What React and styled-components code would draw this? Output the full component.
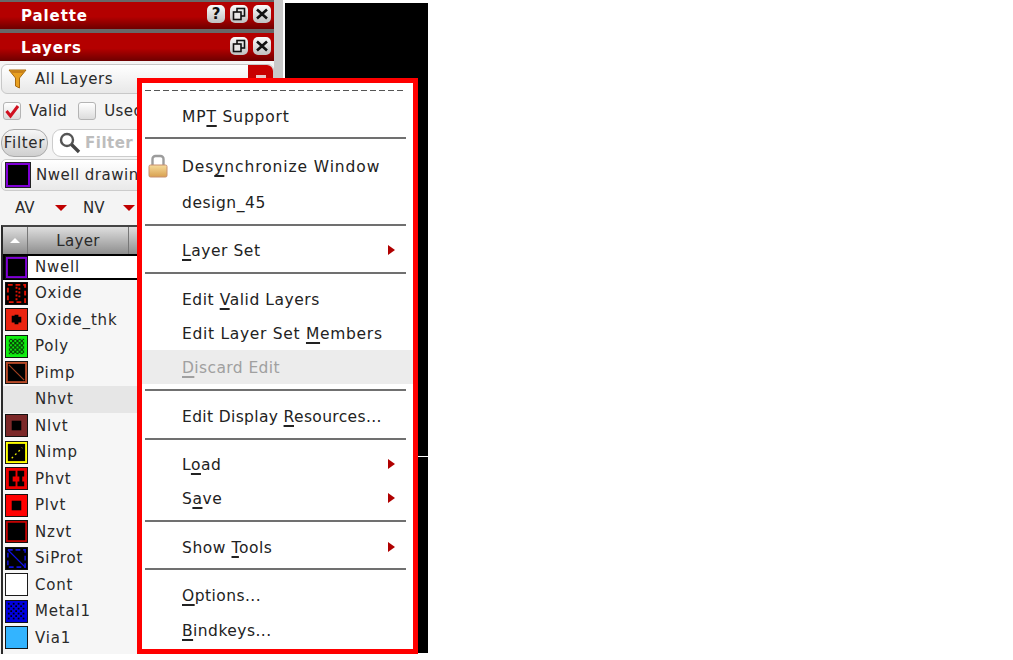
import styled, { createGlobalStyle } from "styled-components";

const COLORS = {
  RED: "#ff0000",
  TITLE_TOP: "#b40000",
  TITLE_BOTTOM: "#6e0000",
  TEXT: "#2a2a2a",
  DOCK: "#f4f4f4",
  EDGE: "#c9c9c9",
  LINE: "#707070",
};

const Global = createGlobalStyle`
  html, body { margin: 0; padding: 0; background: #fff; }
  body { font-family: "DejaVu Sans", sans-serif; color: ${COLORS.TEXT}; }
`;

const Page = styled.div`
  position: relative;
  display: flex;
  width: 1013px;
  height: 660px;
  overflow: hidden;
  background: #fff;
`;

const Dock = styled.div`
  width: 285px;
  height: 654px;
  flex: none;
  box-sizing: border-box;
  overflow: hidden;
  background: ${COLORS.EDGE};
  border-right: 2px solid #fff;
  padding-right: 9px;
`;

const DockColumn = styled.div`
  height: 100%;
  display: flex;
  flex-direction: column;
  background: ${COLORS.DOCK};
`;

const TitleGroup = styled.div`
  padding-top: 2px;
  background: #686868;
`;

const Canvas = styled.div`
  position: relative;
  width: 143px;
  height: 650px;
  margin-top: 3px;
  background: #000;
`;

const CanvasTick = styled.div`
  position: absolute;
  left: 133px;
  right: 0;
  top: 453px;
  height: 1px;
  background: #fff;
`;

const TitleBar = styled.div`
  height: ${(p) => p.$height}px;
  margin-bottom: ${(p) => p.$gap}px;
  padding: 0 3px 0 21px;
  display: flex;
  align-items: center;
  gap: 5px;
  background: linear-gradient(${COLORS.TITLE_TOP} 0%, ${COLORS.TITLE_TOP} 55%, ${COLORS.TITLE_BOTTOM} 100%);
  color: #fff;
  font-size: 15px;
  font-weight: 700;
  letter-spacing: 0.9px;
`;

const TitleText = styled.span`
  flex: 1;
  padding-top: 1px;
`;

const TitleButton = styled.div`
  width: 18px;
  height: 18px;
  margin-bottom: 3px;
  border-radius: 5px;
  background: linear-gradient(#fafafa, #c0c0c0);
  display: flex;
  align-items: center;
  justify-content: center;
  color: #111;
  font-size: 15px;
  font-weight: 700;
  letter-spacing: 0;
`;

const Combo = styled.div`
  height: 28px;
  margin: 3px 0 0 1px;
  padding-left: 6px;
  display: flex;
  align-items: center;
  gap: 7px;
  border: 1px solid #c8c8c8;
  border-radius: 6px;
  background: linear-gradient(#fff, #e8e8e8);
  font-size: 15px;
  letter-spacing: 0.5px;
`;

const ComboArrow = styled.div`
  margin-left: auto;
  width: 25px;
  height: 100%;
  background: #c80000;
  border-radius: 0 6px 6px 0;
  display: flex;
  justify-content: center;
  padding-top: 10px;
  box-sizing: border-box;
  &::after {
    content: "";
    width: 10px;
    height: 4px;
    background: #e8c8c8;
  }
`;

const CheckRow = styled.div`
  height: 24px;
  margin-top: 5px;
  padding-left: 3px;
  display: flex;
  align-items: center;
  font-size: 15px;
  letter-spacing: 0.4px;
`;

const CheckBox = styled.div`
  width: 16px;
  height: 16px;
  margin-right: 8px;
  border: 1px solid #b4b4b4;
  border-radius: 3px;
  background: linear-gradient(#fff, #dcdcdc);
  display: flex;
  align-items: center;
  justify-content: center;
`;

const CheckLabel = styled.span`
  margin-right: 11px;
`;

const FilterRow = styled.div`
  height: 28px;
  margin-top: 6px;
  display: flex;
  align-items: center;
  gap: 4px;
  padding-left: 1px;
`;

const FilterButton = styled.div`
  width: 45px;
  height: 26px;
  border: 1px solid #aaa;
  border-radius: 13px;
  background: linear-gradient(#f6f6f6, #cfcfcf);
  display: flex;
  align-items: center;
  justify-content: center;
  font-size: 15px;
  letter-spacing: 0.7px;
`;

const FilterInput = styled.div`
  flex: 1;
  height: 26px;
  padding-left: 5px;
  border: 1px solid #ccc;
  border-radius: 9px;
  background: #fff;
  display: flex;
  align-items: center;
  gap: 3px;
  color: #bdbdbd;
  font-size: 15px;
  font-weight: 700;
  letter-spacing: 0.5px;
`;

const LayerSelect = styled.div`
  height: 30px;
  margin: 2px 0 0 1px;
  padding-left: 4px;
  display: flex;
  align-items: center;
  gap: 6px;
  border: 1px solid #ccc;
  border-radius: 5px;
  background: linear-gradient(#fff, #e9e9e9);
  font-size: 15px;
  letter-spacing: 0.5px;
  white-space: nowrap;
`;

const BigSwatch = styled.div`
  width: 20px;
  height: 20px;
  background: #000;
  border: 2px solid #8000d8;
  outline: 1px solid #222;
`;

const VisRow = styled.div`
  height: 26px;
  margin-top: 4px;
  padding-left: 15px;
  display: flex;
  align-items: center;
  font-size: 15px;
`;

const VisLabel = styled.span`
  width: 40px;
`;

const VisArrow = styled.div`
  width: 0;
  height: 0;
  margin-right: 16px;
  border-left: 6px solid transparent;
  border-right: 6px solid transparent;
  border-top: 6px solid #c00000;
`;

const TableFrame = styled.div`
  margin: 4px 0 0 1px;
  border-left: 2px solid #2a2a2a;
  border-top: 2px solid #444;
  flex: 1;
  background: #f6f6f6;
`;

const TableHead = styled.div`
  height: 27px;
  display: flex;
  background: linear-gradient(#dedede, #8e8e8e);
  font-size: 15px;
  letter-spacing: 0.3px;
`;

const SortCell = styled.div`
  width: 24px;
  display: flex;
  align-items: center;
  justify-content: center;
  border-right: 1px solid #777;
`;

const SortArrow = styled.div`
  width: 0;
  height: 0;
  border-left: 5px solid transparent;
  border-right: 5px solid transparent;
  border-bottom: 5px solid #fff;
`;

const LayerCell = styled.div`
  width: 100px;
  display: flex;
  align-items: center;
  justify-content: center;
  border-right: 1px solid #777;
`;

const LayerRow = styled.div`
  height: ${(p) => (p.$selected ? "26px" : "26.5px")};
  display: flex;
  align-items: center;
  gap: 7px;
  padding-left: 2px;
  box-sizing: border-box;
  font-size: 15px;
  letter-spacing: 0.8px;
  background: ${(p) =>
    p.$selected
      ? "linear-gradient(90deg, #000 25px, #fff 25px)"
      : p.$shaded
        ? "#e6e6e6"
        : "transparent"};
  border-top: ${(p) => (p.$selected ? "2px solid #000" : "none")};
  border-bottom: ${(p) => (p.$selected ? "2px solid #000" : "none")};
`;

const SwatchFrame = styled.svg`
  width: 23px;
  height: 23px;
  flex: none;
  display: block;
`;

const EmptySwatch = styled.div`
  width: 23px;
  flex: none;
`;

const Menu = styled.div`
  position: absolute;
  left: 137px;
  top: 78px;
  width: 281px;
  height: 576px;
  box-sizing: border-box;
  border: 5px solid ${COLORS.RED};
  background: #fff;
  padding: 0 7px 0 3px;
  font-size: 15.5px;
  color: #222;
`;

const TearOff = styled.div`
  height: 16px;
  display: flex;
  align-items: center;
  &::after {
    content: "";
    display: block;
    width: 100%;
    height: 1px;
    margin-top: -2px;
    background: repeating-linear-gradient(90deg, #555 0 6px, transparent 6px 9px);
  }
`;

const MenuItem = styled.div`
  position: relative;
  height: ${(p) => p.$height || 34}px;
  box-sizing: border-box;
  margin: 0 -7px 0 -3px;
  padding: 2px 0 0 40px;
  display: flex;
  align-items: center;
  letter-spacing: ${(p) => p.$tracking ?? 0.55}px;
  color: ${(p) => (p.$disabled ? "#a0a0a0" : "inherit")};
  background: ${(p) => (p.$disabled ? "#ececec" : "transparent")};
`;

const Underline = styled.span`
  text-decoration: underline;
  text-underline-offset: 3px;
  text-decoration-thickness: 2px;
  text-decoration-skip-ink: none;
`;

const MenuIcon = styled.svg`
  position: absolute;
  left: 6px;
  top: 5px;
  width: 20px;
  height: 24px;
`;

const SubArrow = styled.div`
  position: absolute;
  right: 18px;
  top: 12px;
  width: 0;
  height: 0;
  border-top: 5px solid transparent;
  border-bottom: 5px solid transparent;
  border-left: 7px solid #b00000;
`;

const Separator = styled.div`
  height: ${(p) => p.$height}px;
  box-sizing: border-box;
  padding-top: ${(p) => p.$top}px;
  &::after {
    content: "";
    display: block;
    height: 2px;
    background: ${COLORS.LINE};
  }
`;

const RestoreIcon = () => (
  <svg width="14" height="14" viewBox="0 0 14 14" fill="none" stroke="#111" strokeWidth="1.6">
    <rect x="5" y="1.5" width="7.5" height="7.5" />
    <rect x="1.5" y="5" width="7.5" height="7.5" fill="#e8e8e8" />
  </svg>
);

const CloseIcon = () => (
  <svg width="14" height="14" viewBox="0 0 14 14" stroke="#111" strokeWidth="2.6">
    <path d="M2 2.5 12 11.5M12 2.5 2 11.5" />
  </svg>
);

const Funnel = () => (
  <svg width="20" height="22" viewBox="0 0 20 22">
    <path d="M1 2h17l-6.5 8v10l-4-2v-8z" fill="#e8a020" stroke="#a86a10" strokeWidth="1" />
    <path d="M2.5 3h14l-2 2h-10z" fill="#c8801a" />
  </svg>
);

const Magnifier = () => (
  <svg width="24" height="24" viewBox="0 0 24 24" fill="none">
    <circle cx="9" cy="9" r="6" stroke="#555" strokeWidth="2.4" fill="#fff" />
    <path d="M13.5 13.5 21 21" stroke="#444" strokeWidth="3.4" />
  </svg>
);

const dots = (cols, color, r = 1) => {
  const out = [];
  for (let y = 0; y < cols; y++) {
    for (let x = 0; x < cols; x++) {
      if ((x + y) % 2 === 0) {
        out.push(
          <rect
            key={`${x}-${y}`}
            x={3 + (x * 18) / cols}
            y={3 + (y * 18) / cols}
            width={r * 2}
            height={r * 2}
            fill={color}
          />
        );
      }
    }
  }
  return out;
};

// each layer's stipple, drawn on a 24x24 box
const SWATCH_ART = {
  nwell: <rect x="2" y="2" width="20" height="20" fill="#000" stroke="#8000d8" strokeWidth="2" />,
  oxide: (
    <>
      <rect x="1" y="1" width="22" height="22" fill="#000" />
      <rect x="3" y="3" width="18" height="18" fill="none" stroke="#e01000" strokeWidth="2" strokeDasharray="5 3" />
      <path d="M12 5v14M15 6v12" stroke="#e01000" strokeWidth="2" strokeDasharray="2 2" />
    </>
  ),
  oxideThk: (
    <>
      <rect x="1" y="1" width="22" height="22" fill="#ea2410" />
      <path d="M7 8h3v-1h4v2h3v6h-3v2h-4v-2h-3z" fill="#000" />
    </>
  ),
  poly: (
    <>
      <rect x="1" y="1" width="22" height="22" fill="#10f010" />
      <rect x="4" y="4" width="16" height="16" fill="#064a06" />
      {dots(8, "#10e010")}
    </>
  ),
  pimp: (
    <>
      <rect x="2" y="2" width="20" height="20" fill="#000" stroke="#b84a28" strokeWidth="2" />
      <path d="M4 4 20 20" stroke="#a04020" strokeWidth="1.2" />
    </>
  ),
  nlvt: (
    <>
      <rect x="1" y="1" width="22" height="22" fill="#7c2828" />
      <rect x="7" y="7" width="10" height="10" fill="#000" />
    </>
  ),
  nimp: (
    <>
      <rect x="2" y="2" width="20" height="20" fill="#000" stroke="#ffff00" strokeWidth="2" />
      <path d="M7 18 18 7" stroke="#e8e800" strokeWidth="1.4" strokeDasharray="2 3" />
    </>
  ),
  phvt: (
    <>
      <rect x="1" y="1" width="22" height="22" fill="#f00000" />
      <path d="M4 4h7v6H8v5h3v5H4zM13 4h7v6h-2v5h2v5h-7v-5h2v-5h-2z" fill="#000" />
    </>
  ),
  plvt: (
    <>
      <rect x="1" y="1" width="22" height="22" fill="#ff0000" />
      <rect x="7" y="7" width="10" height="10" fill="#000" />
    </>
  ),
  nzvt: <rect x="2" y="2" width="20" height="20" fill="#000" stroke="#e00000" strokeWidth="1.6" />,
  siprot: (
    <>
      <rect x="1" y="1" width="22" height="22" fill="#000" />
      <rect x="3" y="3" width="18" height="18" fill="none" stroke="#1010d8" strokeWidth="1.6" strokeDasharray="5 3" />
      <path d="M3 3 21 21" stroke="#1010e8" strokeWidth="1.4" />
    </>
  ),
  cont: <rect x="1" y="1" width="22" height="22" fill="#fff" />,
  metal1: (
    <>
      <rect x="1" y="1" width="22" height="22" fill="#0000e0" />
      {dots(7, "#000", 0.9)}
    </>
  ),
  via1: <rect x="1" y="1" width="22" height="22" fill="#33b4ff" />,
};

const LAYERS = [
  { name: "Nwell", art: "nwell", selected: true },
  { name: "Oxide", art: "oxide" },
  { name: "Oxide_thk", art: "oxideThk" },
  { name: "Poly", art: "poly" },
  { name: "Pimp", art: "pimp" },
  { name: "Nhvt", shaded: true },
  { name: "Nlvt", art: "nlvt" },
  { name: "Nimp", art: "nimp" },
  { name: "Phvt", art: "phvt" },
  { name: "Plvt", art: "plvt" },
  { name: "Nzvt", art: "nzvt" },
  { name: "SiProt", art: "siprot" },
  { name: "Cont", art: "cont" },
  { name: "Metal1", art: "metal1" },
  { name: "Via1", art: "via1" },
];

const Swatch = ({ art }) => {
  if (!art) return <EmptySwatch />;
  return (
    <SwatchFrame viewBox="0 0 24 24">
      <rect x="0" y="0" width="24" height="24" fill="#111" />
      {SWATCH_ART[art]}
    </SwatchFrame>
  );
};

const Lock = () => (
  <MenuIcon viewBox="0 0 20 24">
    <defs>
      <linearGradient id="lockBody" x1="0" y1="0" x2="0" y2="1">
        <stop offset="0" stopColor="#f6dc9c" />
        <stop offset="1" stopColor="#d8a050" />
      </linearGradient>
    </defs>
    <path d="M4.5 12V5a3 3 0 0 1 3-3h5a3 3 0 0 1 3 3v7" fill="none" stroke="#9c9c9c" strokeWidth="2.4" />
    <rect x="1" y="11" width="18" height="12" rx="1.5" fill="url(#lockBody)" stroke="#c89070" />
  </MenuIcon>
);

const App = () => (
  <Page>
    <Global />
    <Dock>
      <DockColumn>
        <TitleGroup>
          <TitleBar $height={27} $gap={4}>
            <TitleText>Palette</TitleText>
            <TitleButton>?</TitleButton>
            <TitleButton>
              <RestoreIcon />
            </TitleButton>
            <TitleButton>
              <CloseIcon />
            </TitleButton>
          </TitleBar>
          <TitleBar $height={28} $gap={0}>
            <TitleText>Layers</TitleText>
            <TitleButton>
              <RestoreIcon />
            </TitleButton>
            <TitleButton>
              <CloseIcon />
            </TitleButton>
          </TitleBar>
        </TitleGroup>
        <Combo>
          <Funnel />
          All Layers
          <ComboArrow />
        </Combo>
        <CheckRow>
          <CheckBox>
            <svg width="16" height="16" viewBox="0 0 16 16" fill="none">
              <path d="M2.5 8 6.5 13 14 3" stroke="#d01020" strokeWidth="3" />
            </svg>
          </CheckBox>
          <CheckLabel>Valid</CheckLabel>
          <CheckBox />
          <CheckLabel>Used</CheckLabel>
        </CheckRow>
        <FilterRow>
          <FilterButton>Filter</FilterButton>
          <FilterInput>
            <Magnifier />
            Filter
          </FilterInput>
        </FilterRow>
        <LayerSelect>
          <BigSwatch />
          Nwell drawing
        </LayerSelect>
        <VisRow>
          <VisLabel>AV</VisLabel>
          <VisArrow />
          <VisLabel>NV</VisLabel>
          <VisArrow />
        </VisRow>
        <TableFrame>
          <TableHead>
            <SortCell>
              <SortArrow />
            </SortCell>
            <LayerCell>Layer</LayerCell>
          </TableHead>
          {LAYERS.map((layer) => (
            <LayerRow key={layer.name} $selected={layer.selected} $shaded={layer.shaded}>
              <Swatch art={layer.art} />
              {layer.name}
            </LayerRow>
          ))}
        </TableFrame>
      </DockColumn>
    </Dock>
    <Canvas>
      <CanvasTick />
    </Canvas>
    <Menu>
      <TearOff />
      <MenuItem $tracking={0.85}>
        <span>
          MP<Underline>T</Underline> Support
        </span>
      </MenuItem>
      <Separator $height={16} $top={4} />
      <MenuItem $tracking={0.9}>
        <Lock />
        <span>
          Des<Underline>y</Underline>nchronize Window
        </span>
      </MenuItem>
      <MenuItem $height={38}>design_45</MenuItem>
      <Separator $height={12} $top={3} />
      <MenuItem>
        <span>
          <Underline>L</Underline>ayer Set
        </span>
        <SubArrow />
      </MenuItem>
      <Separator $height={15} $top={5} />
      <MenuItem $tracking={0.55}>
        <span>
          Edit <Underline>V</Underline>alid Layers
        </span>
      </MenuItem>
      <MenuItem $tracking={0.7}>
        <span>
          Edit Layer Set <Underline>M</Underline>embers
        </span>
      </MenuItem>
      <MenuItem $disabled $tracking={0.4}>
        <span>
          <Underline>D</Underline>iscard Edit
        </span>
      </MenuItem>
      <Separator $height={15} $top={5} />
      <MenuItem $tracking={0.35}>
        <span>
          Edit Display <Underline>R</Underline>esources...
        </span>
      </MenuItem>
      <Separator $height={14} $top={5} />
      <MenuItem>
        <span>
          L<Underline>o</Underline>ad
        </span>
        <SubArrow />
      </MenuItem>
      <MenuItem>
        <span>
          S<Underline>a</Underline>ve
        </span>
        <SubArrow />
      </MenuItem>
      <Separator $height={15} $top={5} />
      <MenuItem>
        <span>
          Show <Underline>T</Underline>ools
        </span>
        <SubArrow />
      </MenuItem>
      <Separator $height={14} $top={4} />
      <MenuItem $tracking={0.45}>
        <span>
          <Underline>O</Underline>ptions...
        </span>
      </MenuItem>
      <MenuItem $height={36} $tracking={0.45}>
        <span>
          <Underline>B</Underline>indkeys...
        </span>
      </MenuItem>
    </Menu>
  </Page>
);

export default App;
